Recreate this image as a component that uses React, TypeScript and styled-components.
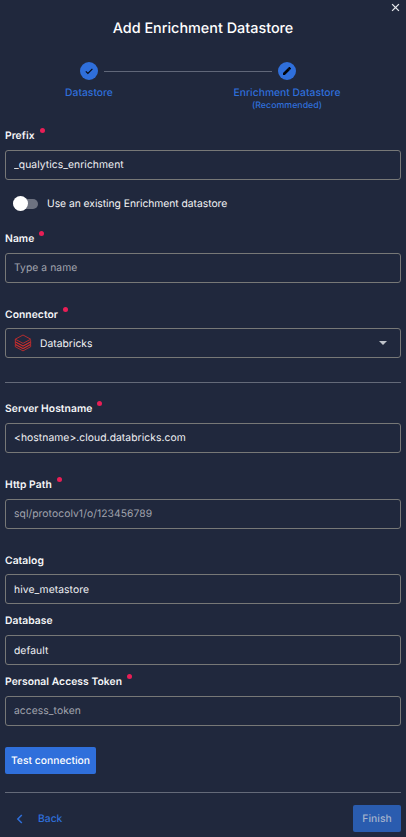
import React from "react";
import styled, { createGlobalStyle } from "styled-components";

const GlobalStyle = createGlobalStyle`
  *, *::before, *::after { box-sizing: border-box; }
  body {
    margin: 0;
    background: #20283d;
    font-family: Inter, "Liberation Sans", sans-serif;
    -webkit-font-smoothing: antialiased;
    text-rendering: geometricPrecision;
  }
  button, input { font: inherit; letter-spacing: inherit; text-rendering: inherit; }
`;

const Dialog = styled.main`
  position: relative;
  display: flex;
  flex-direction: column;
  height: 837px;
  padding: 0 5px;
  overflow: hidden;
  color: #f3f4f6;
  font-size: 10.3px;
  line-height: 16px;
  letter-spacing: 0.02px;
`;

const CloseButton = styled.button`
  position: absolute;
  top: 3px;
  right: 6px;
  display: flex;
  padding: 0;
  border: 0;
  background: none;
  color: #e8eaee;
`;

const Title = styled.h1`
  margin: 19px 0 0;
  font-size: 14.4px;
  line-height: 20px;
  font-weight: 500;
  letter-spacing: 0;
  text-align: center;
  color: #fff;
`;

const Stepper = styled.div`
  display: grid;
  grid-template-columns: 168px 30px 168px;
  height: 65px;
  margin: 23px 0 0;
`;

const Step = styled.div`
  display: flex;
  flex-direction: column;
  align-items: center;
  color: #2f6fdb;
  white-space: nowrap;
`;

const StepDot = styled.span`
  display: grid;
  place-items: center;
  width: 18px;
  height: 18px;
  border-radius: 50%;
  background: #2f6fdb;
`;

const StepLine = styled.span`
  height: 1px;
  margin: 9px -69px 0;
  background: #606779;
`;

const StepName = styled.span`
  margin-top: 6px;
  font-weight: 500;
  line-height: 15px;
`;

const StepNote = styled.span`
  font-size: 8.8px;
  font-weight: 500;
  line-height: 10px;
`;

const Field = styled.div<{ $gap?: number; $labelGap?: number }>`
  display: flex;
  flex-direction: column;
  gap: ${(p) => p.$labelGap ?? 7}px;
  margin-top: ${(p) => p.$gap ?? 0}px;
`;

const Label = styled.label`
  display: flex;
  height: 16px;
  padding-top: 1px;
  font-weight: 600;
  letter-spacing: 0.06px;
  color: #f5f6f8;
`;

const RequiredDot = styled.i`
  width: 5px;
  height: 5px;
  margin: 0 0 0 5px;
  border-radius: 50%;
  background: #e91e56;
`;

const TextInput = styled.input<{ $lowered?: boolean }>`
  width: 100%;
  height: 30px;
  padding: ${(p) => (p.$lowered ? 2 : 0)}px 8px 0;
  border: 1px solid #777877;
  border-radius: 3px;
  outline: none;
  background: transparent;
  color: #eff0f3;
  letter-spacing: 0.07px;
  &::placeholder { color: #a0a4ae; opacity: 1; }
`;

const SelectBox = styled.div`
  display: flex;
  align-items: center;
  height: 30px;
  padding: 0 13px 0 8px;
  border: 1px solid #777877;
  border-radius: 3px;
`;

const SelectValue = styled.span`
  flex: 1;
  padding-top: 2px;
  margin-left: 8px;
`;

const SwitchRow = styled.div`
  display: flex;
  align-items: center;
  gap: 9px;
  height: 47px;
  margin-bottom: 3px;
  padding-left: 8px;
  letter-spacing: -0.03px;
`;

const SwitchTrack = styled.span`
  display: flex;
  align-items: center;
  width: 25px;
  height: 10px;
  border-radius: 5px;
  background: #6d7280;
`;

const SwitchThumb = styled.span`
  flex: none;
  width: 15px;
  height: 15px;
  border-radius: 50%;
  background: #fff;
`;

const Divider = styled.hr<{ $top: number; $bottom: number }>`
  width: 100%;
  height: 1px;
  margin: ${(p) => p.$top}px 0 ${(p) => p.$bottom}px;
  border: 0;
  background: #646a79;
`;

const Button = styled.button<{ $width: number; $muted?: boolean }>`
  width: ${(p) => p.$width}px;
  height: 27px;
  padding: 1px 0 0;
  border: 0;
  border-radius: 2px;
  background: ${(p) => (p.$muted ? "#2a5caf" : "#2f6fdb")};
  color: ${(p) => (p.$muted ? "#a5b3cd" : "#fff")};
  font-weight: 500;
  white-space: nowrap;
`;

const Footer = styled.footer`
  display: flex;
  align-items: center;
  justify-content: space-between;
`;

const BackButton = styled.button`
  display: flex;
  align-items: center;
  gap: 15px;
  padding: 0 0 0 11px;
  border: 0;
  background: none;
  color: #2f6fdb;
  font-weight: 500;
`;

const DatabricksLogo = () => (
  <svg width="18" height="18" viewBox="0 0 18 18" fill="none" stroke="#d72d2b" strokeWidth="0.8" strokeLinejoin="round">
    <path d="M1.3 5.2 9 1l7.7 4.2L9 9.4 1.3 5.2v2.5L9 11.9l7.7-4.2V6.1" />
    <path d="M1.3 7.9v2.3L9 14.4l7.7-4.2V8L9 12.2Z" />
    <path d="M16.7 10.6v2.1L9 16.9l-7.7-4.2v-2.1L9 14.8Z" />
  </svg>
);

type TextFieldProps = {
  id: string;
  label: string;
  value?: string;
  placeholder?: string;
  required?: boolean;
  lowered?: boolean;
  gap?: number;
  labelGap?: number;
};

const TextField = ({ id, label, value, placeholder, required, lowered, gap, labelGap }: TextFieldProps) => (
  <Field $gap={gap} $labelGap={labelGap}>
    <Label htmlFor={id}>
      {label}
      {required && <RequiredDot />}
    </Label>
    <TextInput id={id} defaultValue={value} placeholder={placeholder} $lowered={lowered} />
  </Field>
);

export default function App() {
  return (
    <>
      <GlobalStyle />
      <Dialog>
        <CloseButton aria-label="Close">
          <svg width="9" height="9" viewBox="0 0 9 9" stroke="currentColor" strokeWidth="1.3">
            <path d="m1.1 1.1 6.8 6.8M7.9 1.1 1.1 7.9" />
          </svg>
        </CloseButton>
        <Title>Add Enrichment Datastore</Title>
        <Stepper>
          <Step>
            <StepDot>
              <svg width="10" height="10" viewBox="0 0 10 10" fill="none" stroke="#070b16" strokeWidth="1.2">
                <path d="m1.8 5.3 2.1 2.1 4.5-4.6" />
              </svg>
            </StepDot>
            <StepName>Datastore</StepName>
          </Step>
          <StepLine />
          <Step>
            <StepDot>
              <svg width="10" height="10" viewBox="0 0 10 10" fill="#02040a">
                <path d="M1 7.1V9h1.9l4.8-4.8-1.9-1.9ZM8.9 3c.2-.2.2-.5 0-.7L7.7 1.1c-.2-.2-.5-.2-.7 0l-1.1 1.1L7.8 4.1Z" />
              </svg>
            </StepDot>
            <StepName>Enrichment Datastore</StepName>
            <StepNote>(Recommended)</StepNote>
          </Step>
        </Stepper>

        <TextField id="prefix" label="Prefix" value="_qualytics_enrichment" required />
        <SwitchRow role="switch" aria-checked="false">
          <SwitchTrack>
            <SwitchThumb />
          </SwitchTrack>
          Use an existing Enrichment datastore
        </SwitchRow>
        <TextField id="name" label="Name" placeholder="Type a name" required />
        <Field $gap={23} $labelGap={6}>
          <Label>
            Connector
            <RequiredDot />
          </Label>
          <SelectBox>
            <DatabricksLogo />
            <SelectValue>Databricks</SelectValue>
            <svg width="8" height="4" viewBox="0 0 8 4" fill="#bfc3ca">
              <path d="M0 0h8L4 4Z" />
            </svg>
          </SelectBox>
        </Field>
        <Divider $top={24} $bottom={17} />
        <TextField id="host" label="Server Hostname" value="<hostname>.cloud.databricks.com" required />
        <TextField id="path" label="Http Path" placeholder="sql/protocolv1/o/123456789" required gap={23} />
        <TextField id="catalog" label="Catalog" value="hive_metastore" lowered gap={23} labelGap={6} />
        <TextField id="database" label="Database" value="default" lowered gap={8} />
        <TextField id="token" label="Personal Access Token" placeholder="access_token" required gap={8} />
        <Field $gap={21}>
          <Button $width={91}>Test connection</Button>
        </Field>
        <Divider $top={18} $bottom={12} />
        <Footer>
          <BackButton>
            <svg width="7" height="10" viewBox="0 0 7 10" fill="none" stroke="currentColor" strokeWidth="1.5">
              <path d="M5.8 1 1.8 5l4 4" />
            </svg>
            Back
          </BackButton>
          <Button $width={48} $muted>
            Finish
          </Button>
        </Footer>
      </Dialog>
    </>
  );
}
